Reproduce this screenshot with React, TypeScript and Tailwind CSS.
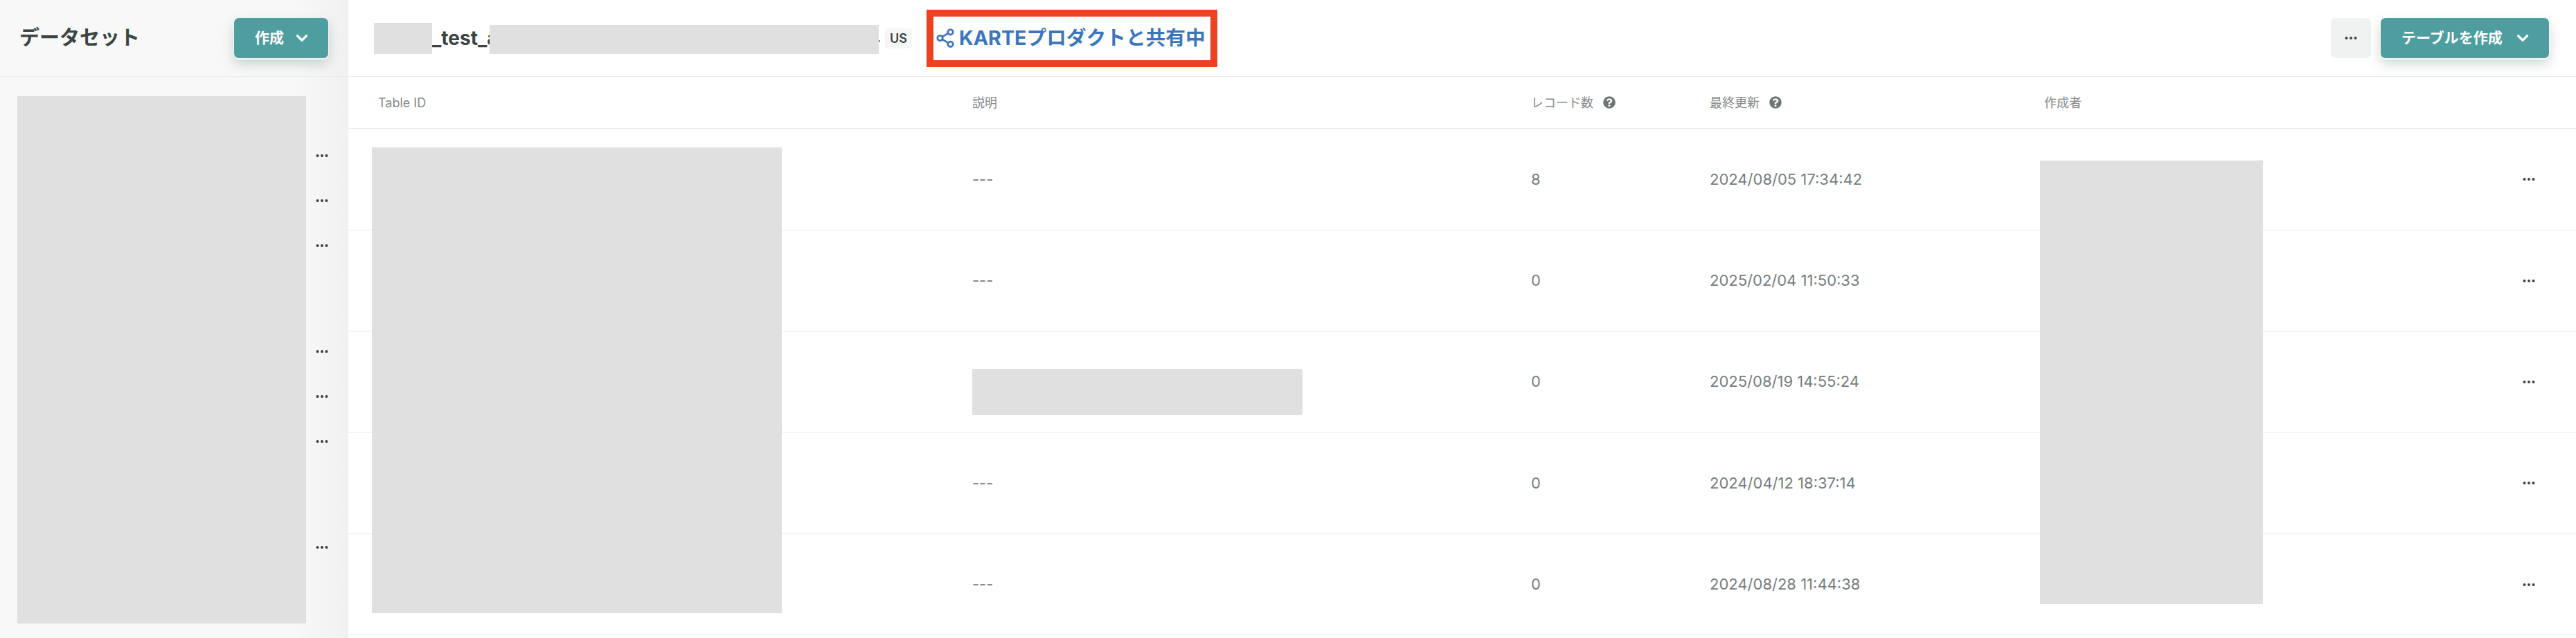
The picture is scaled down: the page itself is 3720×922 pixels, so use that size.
import React from 'react';
import { ChevronDown, Share2 } from 'lucide-react';
import { FaQuestionCircle } from 'react-icons/fa';

const rows = [
  { desc: '---', count: '8', updated: '2024/08/05 17:34:42', height: 'h-[147px]' },
  { desc: '---', count: '0', updated: '2025/02/04 11:50:33', height: 'h-[146px]' },
  { desc: '', count: '0', updated: '2025/08/19 14:55:24', height: 'h-[146px]' },
  { desc: '---', count: '0', updated: '2024/04/12 18:37:14', height: 'h-[147px]' },
  { desc: '---', count: '0', updated: '2024/08/28 11:44:38', height: 'h-[146px]' },
];

// gap above each "..." in the dataset list, the bigger ones are where a group starts
const sidebarRows = ['mt-0', 'mt-0', 'mt-0', 'mt-[88px]', 'mt-0', 'mt-0', 'mt-[88px]'];

function Dots() {
  return (
    <svg width="18" height="6" viewBox="0 0 18 6" className="fill-[#3a4341]">
      <circle cx="2.5" cy="3" r="2" />
      <circle cx="9" cy="3" r="2" />
      <circle cx="15.5" cy="3" r="2" />
    </svg>
  );
}

function Redacted({ className }: { className: string }) {
  return <div className={`absolute bg-[#e0e0e0] ${className}`} />;
}

function CreateButton({ label, className }: { label: string; className: string }) {
  return (
    <button
      className={`flex h-[58px] items-center justify-between rounded-[7px] bg-[#4f9e9f] text-[21px] font-bold text-white shadow-[0_1px_0_1px_#f4f6f6,0_8px_18px_rgba(40,60,60,0.22)] ${className}`}
    >
      <span>{label}</span>
      <ChevronDown size={26} strokeWidth={3} />
    </button>
  );
}

function HeaderCell({ label, help }: { label: string; help?: boolean }) {
  return (
    <div className="flex items-center gap-[14px]">
      <span>{label}</span>
      {help && <FaQuestionCircle size={18} className="text-[#6e7776]" />}
    </div>
  );
}

export default function App() {
  return (
    <div className="relative flex h-[922px] w-[3720px] overflow-hidden bg-white font-['Inter','Noto_Sans_CJK_JP',sans-serif]">
      {/* sidebar */}
      <aside className="relative w-[503px] shrink-0 bg-linear-to-r from-[#f8f8f8] from-[85%] to-[#f1f1f1]">
        <div className="flex h-[111px] items-center justify-between border-b border-[#e9e9e9] pl-[28px] pr-[29px]">
          <h1 className="text-[29px] font-bold text-[#3a4542]">データセット</h1>
          <CreateButton label="作成" className="w-[136px] pl-[30px] pr-[25px]" />
        </div>
        <div className="flex flex-col items-end pr-[29px] pt-[81px]">
          {sidebarRows.map((margin, i) => (
            <div key={i} className={`flex h-[65px] items-center ${margin}`}>
              <Dots />
            </div>
          ))}
        </div>
        <Redacted className="left-[25px] top-[139px] h-[762px] w-[417px]" />
      </aside>

      {/* table area */}
      <main className="relative min-w-0 flex-1">
        <div className="flex h-[111px] items-center border-b border-[#e9e9e9] pl-[37px] pr-[39px]">
          <div className="relative h-[45px] w-[738px] pl-[84px] text-[28px] font-bold leading-[45px] text-[#3a4542]">
            _test_a
            <Redacted className="left-0 top-0 h-[45px] w-[84px]" />
            <Redacted className="left-[167px] top-[3px] h-[42px] w-[562px]" />
            <span className="absolute left-[729px] top-[25px] h-[3px] w-[2px] bg-[#8a8f8e]" />
          </div>
          <span className="flex h-[29px] w-[39px] items-center justify-center rounded-[4px] bg-[#f6f6f6] text-[18px] font-semibold text-[#3a4542]">
            US
          </span>
          <div className="ml-[21px] flex h-[83px] w-[420px] items-center gap-[5px] border-[10px] border-[#eb4221] pl-[2px] text-[28.7px] font-bold text-[#3b76bd]">
            <Share2 size={30} strokeWidth={2.2} />
            <span>KARTEプロダクトと共有中</span>
          </div>
          <div className="ml-auto flex items-center gap-[14px]">
            <button className="flex h-[58px] w-[58px] items-center justify-center rounded-[7px] bg-[#f0f1f1]">
              <Dots />
            </button>
            <CreateButton label="テーブルを作成" className="w-[243px] pl-[30px] pr-[25px]" />
          </div>
        </div>

        <div className="grid h-[75px] grid-cols-[858px_807px_258px_483px_1fr] items-center border-b border-[#e9e9e9] pl-[43px] text-[18px] text-[#858a89]">
          <HeaderCell label="Table ID" />
          <HeaderCell label="説明" />
          <HeaderCell label="レコード数" help />
          <HeaderCell label="最終更新" help />
          <HeaderCell label="作成者" />
        </div>

        {rows.map((row, i) => (
          <div
            key={i}
            className={`grid grid-cols-[858px_807px_258px_483px_1fr] items-center border-b border-[#e9e9e9] pl-[43px] text-[22px] text-[#757d7c] ${row.height}`}
          >
            <div />
            <div>{row.desc}</div>
            <div>{row.count}</div>
            <div>{row.updated}</div>
            <div className="flex justify-end pr-[59px]">
              <Dots />
            </div>
          </div>
        ))}

        <Redacted className="left-[34px] top-[213px] h-[673px] w-[592px]" />
        <Redacted className="left-[901px] top-[533px] h-[67px] w-[477px]" />
        <Redacted className="left-[2443px] top-[232px] h-[641px] w-[322px]" />
      </main>
    </div>
  );
}
